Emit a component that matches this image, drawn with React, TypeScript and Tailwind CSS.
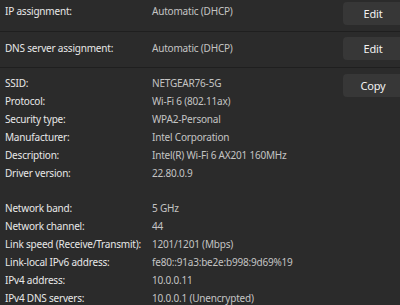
import React from "react";

const font = { fontFamily: '"Noto Sans", "Open Sans", sans-serif' };

function Btn({ label }: { label: string }) {
  return (
    <div className="flex h-[23px] w-[60px] shrink-0 items-center justify-center rounded-[4px] bg-[#373737] pb-[1px] text-[11px] tracking-[-0.2px] text-[#f2f2f2]">
      {label}
    </div>
  );
}

function Row({ k, v }: { k: string; v: string }) {
  return (
    <div className="flex h-[18px] items-center whitespace-nowrap">
      <div className="w-[147px] shrink-0 text-[#e8e8e8]">{k}</div>
      <div className="text-[#c4c4c4]">{v}</div>
    </div>
  );
}

export default function App() {
  return (
    <div
      className="h-[305px] w-[400px] overflow-hidden bg-[#2b2b2b] text-[10px] leading-none tracking-[-0.2px]"
      style={font}
    >
      <div className="flex h-[32px] items-start whitespace-nowrap border-b border-[#1f1f1f] pl-[5px]">
        <div className="flex h-[22px] flex-1 items-center">
          <div className="w-[147px] shrink-0 text-[#e8e8e8]">IP assignment:</div>
          <div className="flex-1 text-[#c4c4c4]">Automatic (DHCP)</div>
        </div>
        <div className="mr-[-3px] mt-[2px]"><Btn label="Edit" /></div>
      </div>
      <div className="flex h-[36px] items-center whitespace-nowrap border-b border-[#1f1f1f] pb-[4px] pl-[5px]">
        <div className="w-[147px] shrink-0 text-[#e8e8e8]">DNS server assignment:</div>
        <div className="flex-1 text-[#c4c4c4]">Automatic (DHCP)</div>
        <div className="mr-[-3px] mt-[2px]"><Btn label="Edit" /></div>
      </div>
      <div className="flex pl-[5px] pt-[6px]">
        <div className="flex flex-1 flex-col">
          <Row k="SSID:" v="NETGEAR76-5G" />
          <Row k="Protocol:" v="Wi-Fi 6 (802.11ax)" />
          <Row k="Security type:" v="WPA2-Personal" />
          <Row k="Manufacturer:" v="Intel Corporation" />
          <Row k="Description:" v="Intel(R) Wi-Fi 6 AX201 160MHz" />
          <Row k="Driver version:" v="22.80.0.9" />
          <div className="h-[17px]" />
          <Row k="Network band:" v="5 GHz" />
          <Row k="Network channel:" v="44" />
          <Row k="Link speed (Receive/Transmit):" v="1201/1201 (Mbps)" />
          <Row k="Link-local IPv6 address:" v="fe80::91a3:be2e:b998:9d69%19" />
          <Row k="IPv4 address:" v="10.0.0.11" />
          <Row k="IPv4 DNS servers:" v="10.0.0.1 (Unencrypted)" />
        </div>
        <div className="mr-[-3px]"><Btn label="Copy" /></div>
      </div>
    </div>
  );
}
